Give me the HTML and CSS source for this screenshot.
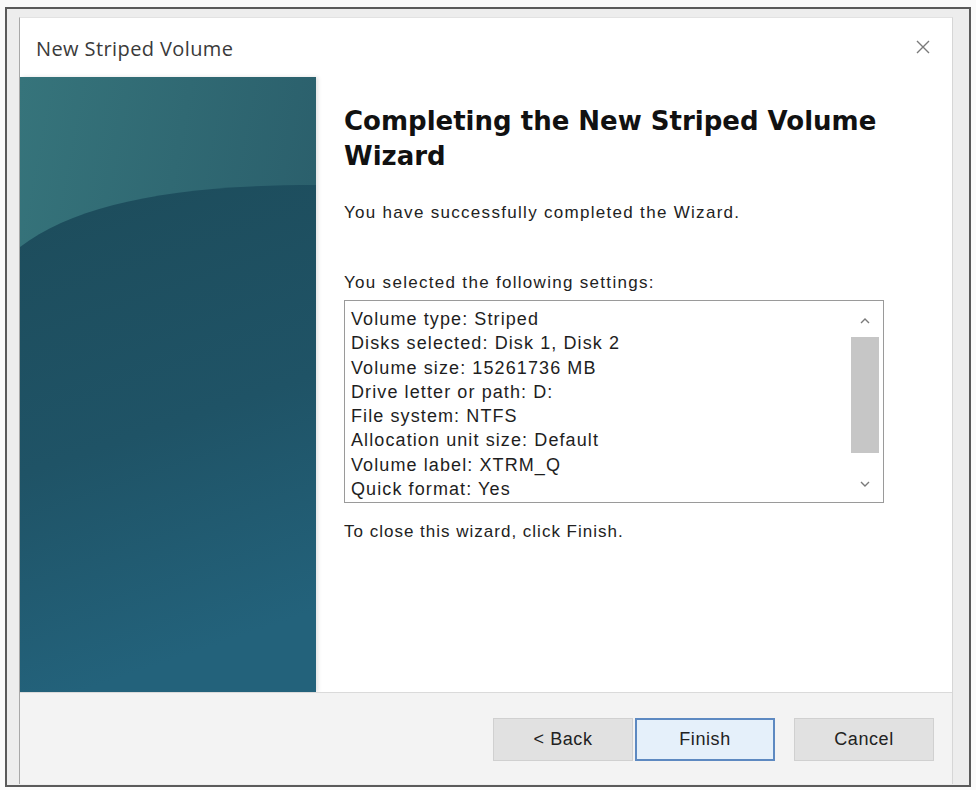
FILE: index.html
```html
<!DOCTYPE html>
<html lang="en">
<head>
    <meta charset="UTF-8">
    <title>New Striped Volume</title>
    <link rel="stylesheet" href="styles.css">
</head>
<body>
    <div class="frame">
        <div class="window">
            <!-- title bar -->
            <div class="titlebar">
                <div class="title">New Striped Volume</div>
                <svg class="close" width="14" height="14" viewBox="0 0 14 14">
                    <path d="M1 1 L13 13 M13 1 L1 13" stroke="#7a7a7a" stroke-width="1.4" fill="none"/>
                </svg>
            </div>

            <div class="main">
                <!-- left banner -->
                <div class="banner">
                    <svg width="296" height="615" viewBox="0 0 296 615" preserveAspectRatio="none">
                        <defs>
                            <linearGradient id="upper" x1="0" y1="0" x2="1" y2="0.4">
                                <stop offset="0" stop-color="#36747b"/>
                                <stop offset="1" stop-color="#2a5e6b"/>
                            </linearGradient>
                            <linearGradient id="lower" x1="0" y1="0" x2="0.2" y2="1">
                                <stop offset="0" stop-color="#1d4c5b"/>
                                <stop offset="0.55" stop-color="#1f5366"/>
                                <stop offset="1" stop-color="#23627b"/>
                            </linearGradient>
                        </defs>
                        <rect width="296" height="615" fill="url(#upper)"/>
                        <path d="M0 170 C 55 128, 150 108, 296 108 L296 615 L0 615 Z" fill="url(#lower)"/>
                    </svg>
                </div>

                <!-- wizard content -->
                <div class="content">
                    <h1>Completing the New Striped Volume Wizard</h1>
                    <p class="done">You have successfully completed the Wizard.</p>
                    <p class="label">You selected the following settings:</p>

                    <div class="listbox">
                        <div class="lines">
                            <div>Volume type: Striped</div>
                            <div>Disks selected: Disk 1, Disk 2</div>
                            <div>Volume size: 15261736 MB</div>
                            <div>Drive letter or path: D:</div>
                            <div>File system: NTFS</div>
                            <div>Allocation unit size: Default</div>
                            <div>Volume label: XTRM_Q</div>
                            <div>Quick format: Yes</div>
                        </div>
                        <div class="scrollbar">
                            <svg class="arrow" width="10" height="6" viewBox="0 0 10 6">
                                <path d="M1 5 L5 1 L9 5" stroke="#7a7a7a" stroke-width="1.4" fill="none"/>
                            </svg>
                            <div class="thumb"></div>
                            <svg class="arrow" width="10" height="6" viewBox="0 0 10 6">
                                <path d="M1 1 L5 5 L9 1" stroke="#7a7a7a" stroke-width="1.4" fill="none"/>
                            </svg>
                        </div>
                    </div>

                    <p class="close-hint">To close this wizard, click Finish.</p>
                </div>
            </div>

            <!-- buttons -->
            <div class="footer">
                <button class="btn">&lt; Back</button>
                <button class="btn default">Finish</button>
                <button class="btn cancel">Cancel</button>
            </div>
        </div>
    </div>
</body>
</html>
```

FILE: styles.css
```css
* {
    margin: 0;
    padding: 0;
    box-sizing: border-box;
}

body {
    font-family: "Liberation Sans", Arial, sans-serif;
    background: #fafafa;
    width: 976px;
    height: 790px;
    overflow: hidden;
    padding: 7px 5px 0 5px;
}

/* outer frame */
.frame {
    width: 966px;
    height: 780px;
    border: 2px solid #5a5a5a;
    background: #ededed;
    padding: 8px 16px 1px 12px;
}

.window {
    height: 100%;
    display: flex;
    flex-direction: column;
    background: #fff;
    border-left: 1px solid #a8a8a8;
    border-right: 1px solid #d6d6d6;
    border-top: 1px solid #e2e2e2;
}

/* title bar */
.titlebar {
    height: 59px;
    display: flex;
    align-items: center;
    justify-content: space-between;
    padding: 0 22px 0 16px;
}

.title {
    font-family: "Open Sans", "Liberation Sans", sans-serif;
    font-size: 20px;
    letter-spacing: 0.4px;
    color: #3a3a3a;
    margin-top: 1px;
}

.close {
    margin-top: -1px;
}

/* main area */
.main {
    display: flex;
    height: 615px;
}

.banner {
    width: 296px;
    height: 615px;
    flex-shrink: 0;
    box-shadow: 2px 0 4px rgba(0, 0, 0, 0.12);
}

.banner svg {
    display: block;
}

.content {
    flex: 1;
    padding: 27px 0 0 28px;
    color: #1a1a1a;
}

.content h1 {
    font-family: "DejaVu Sans", Verdana, sans-serif;
    font-weight: bold;
    font-size: 26px;
    line-height: 35px;
    color: #111;
    width: 580px;
}

.content p {
    font-size: 17px;
    letter-spacing: 1.3px;
    color: #222;
}

.done {
    margin-top: 29px;
}

.label {
    margin-top: 50px;
}

/* settings list */
.listbox {
    display: flex;
    width: 540px;
    height: 203px;
    margin-top: 7px;
    border: 1px solid #9a9a9a;
    background: #fff;
}

.lines {
    flex: 1;
    padding: 6px 0 0 6px;
    font-size: 18px;
    letter-spacing: 1.1px;
    line-height: 24.3px;
    color: #1e1e1e;
}

.scrollbar {
    width: 30px;
    margin: 1px 3px 1px 0;
    display: flex;
    flex-direction: column;
    align-items: center;
    padding-top: 16px;
}

.arrow {
    display: block;
}

.thumb {
    width: 28px;
    height: 116px;
    background: #c6c6c6;
    margin: 13px 0 28px;
}

.close-hint {
    margin-top: 19px;
    letter-spacing: 1px !important;
}

/* footer buttons */
.footer {
    flex: 1;
    border-top: 1px solid #dadada;
    background: #f3f3f3;
    display: flex;
    justify-content: flex-end;
    align-items: flex-start;
    padding: 25px 18px 0 0;
}

.btn {
    width: 140px;
    height: 43px;
    font-family: "Liberation Sans", Arial, sans-serif;
    font-size: 18px;
    letter-spacing: 0.6px;
    color: #222;
    background: #e1e1e1;
    border: 1px solid #d0d0d0;
    margin-left: 2px;
}

.btn.default {
    background: #e5f0fa;
    border: 2px solid #5d89c1;
}

.btn.cancel {
    margin-left: 19px;
}
```
